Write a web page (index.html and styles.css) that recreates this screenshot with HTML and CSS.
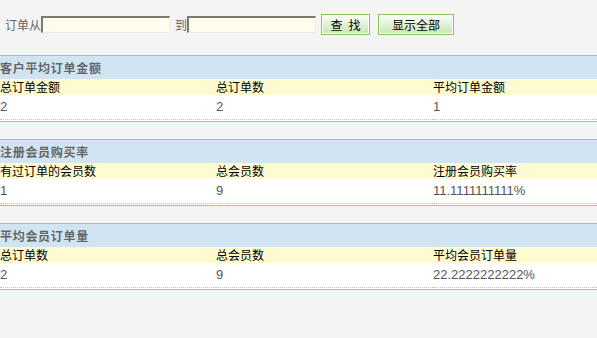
FILE: index.html
```html
<!DOCTYPE html>
<html lang="zh">
<head>
<meta charset="utf-8">
<title>订单统计</title>
<link rel="stylesheet" href="styles.css">
</head>
<body>
<form class="search">
  <label class="lbl">订单从</label><input class="date" type="text"><label class="lbl to">到</label><input class="date" type="text">
  <button type="button" class="btn btn-find">查&ensp;找</button>
  <button type="button" class="btn btn-all">显示全部</button>
</form>

<div class="section">
  <div class="title">客户平均订单金额</div>
  <table class="grid">
    <colgroup><col class="c1"><col class="c2"><col></colgroup>
    <tr class="head"><td>总订单金额</td><td>总订单数</td><td class="last">平均订单金额</td></tr>
    <tr class="data"><td>2</td><td>2</td><td>1</td></tr>
  </table>
</div>

<div class="section">
  <div class="title">注册会员购买率</div>
  <table class="grid">
    <colgroup><col class="c1"><col class="c2"><col></colgroup>
    <tr class="head"><td>有过订单的会员数</td><td>总会员数</td><td class="last">注册会员购买率</td></tr>
    <tr class="data"><td>1</td><td>9</td><td>11.1111111111%</td></tr>
  </table>
</div>

<div class="section">
  <div class="title">平均会员订单量</div>
  <table class="grid">
    <colgroup><col class="c1"><col class="c2"><col></colgroup>
    <tr class="head"><td>总订单数</td><td>总会员数</td><td class="last">平均会员订单量</td></tr>
    <tr class="data"><td>2</td><td>9</td><td>22.2222222222%</td></tr>
  </table>
</div>
</body>
</html>
```

FILE: styles.css
```css
html, body {
  margin: 0;
  padding: 0;
  background: #f4f4f4;
  font-family: "Noto Sans CJK SC", sans-serif;
  font-size: 12px;
}

.search {
  display: flex;
  align-items: center;
  padding: 14px 0 0 5px;
  height: 21px;
  margin: 0 0 20px 0;
}

.lbl {
  color: #666;
  font-size: 12px;
  line-height: 21px;
}

.lbl.to {
  margin-left: 5px;
}

.date {
  box-sizing: border-box;
  width: 129px;
  height: 17px;
  margin: 0;
  padding: 0;
  background: #fffcee;
  border-style: solid;
  border-width: 2px 1px 1px 2px;
  border-color: #7b7b6d #ececec #ececec #7b7b6d;
  outline: none;
}

.btn {
  box-sizing: border-box;
  height: 21px;
  margin: 0;
  padding: 0;
  border: 1px solid #86c35c;
  box-shadow: inset 0 0 0 1px #ffffff;
  background: linear-gradient(#fbfef8, #c6e6b3);
  color: #000;
  font-family: "Noto Sans CJK SC", sans-serif;
  font-size: 12px;
  line-height: 17px;
}

.btn-find {
  width: 49px;
  margin-left: 5px;
}

.btn-all {
  width: 76px;
  margin-left: 8px;
}

.section {
  background: #fff;
  border-top: 1px solid #94c2dc;
  border-bottom: 1px solid #94c2dc;
  padding-bottom: 1px;
  margin-bottom: 17px;
}

.title {
  height: 23px;
  line-height: 23px;
  background: #d0e5f1;
  color: #666;
  font-weight: bold;
  font-size: 12px;
  letter-spacing: 0.7px;
}

.grid {
  width: 100%;
  border-collapse: separate;
  border-spacing: 0;
  table-layout: fixed;
}

.grid .c1 { width: 216px; }
.grid .c2 { width: 217px; }

.grid td {
  padding: 0;
  white-space: nowrap;
}

.head td {
  height: 16px;
  line-height: 16px;
  background: #fffbd0;
  color: #000;
  font-size: 12px;
}

.head td.last {
  box-shadow: inset 1px 0 0 #fff;
}

.data td {
  height: 24px;
  line-height: 24px;
  border-bottom: 1px dotted #b9c4ce;
  color: #555;
  font-family: "Liberation Sans", Arial, sans-serif;
  font-size: 13px;
}
```
